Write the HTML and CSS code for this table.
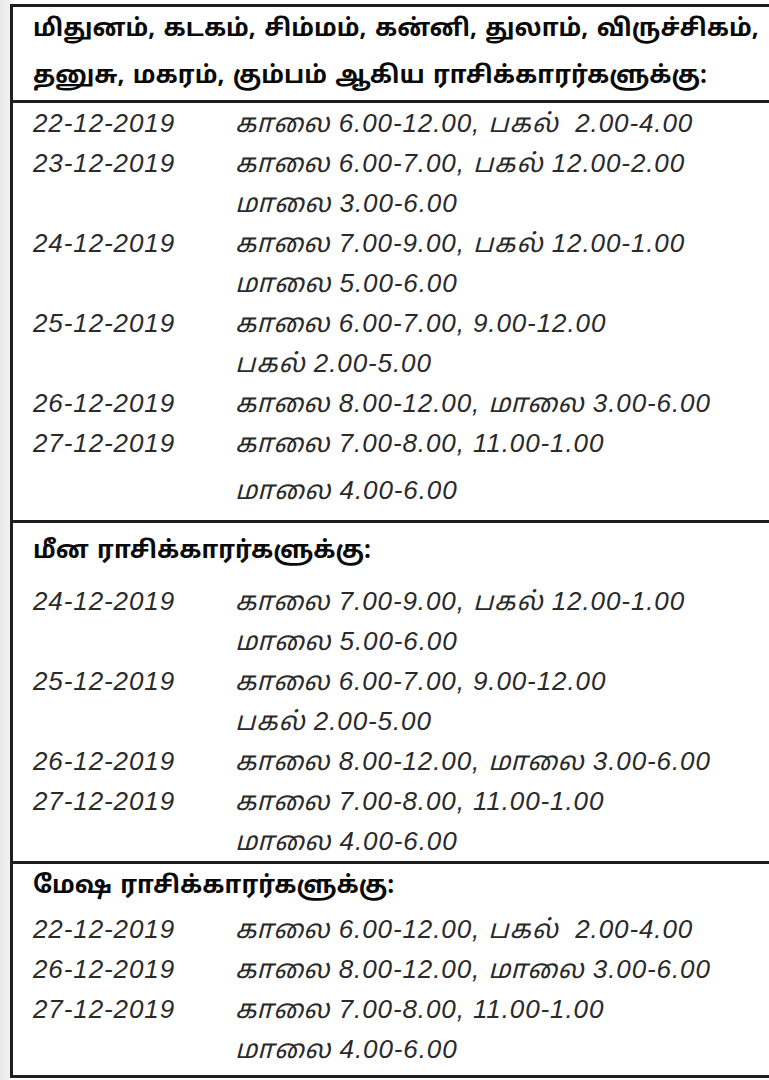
FILE: index.html
```html
<!DOCTYPE html>
<html lang="ta">
<head>
<meta charset="utf-8">
<title>ராசி நேரங்கள்</title>
<link rel="stylesheet" href="styles.css">
</head>
<body>
<div class="page">
  <div class="box">
    <section class="sec sec-1">
      <h2 class="head head-2l">மிதுனம், கடகம், சிம்மம், கன்னி, துலாம், விருச்சிகம்,<br>தனுசு, மகரம், கும்பம் ஆகிய ராசிக்காரர்களுக்கு:</h2>
      <div class="rows">
        <div class="date">22-12-2019</div><div class="time">காலை 6.00-12.00, பகல் &nbsp;2.00-4.00</div>
        <div class="date">23-12-2019</div><div class="time">காலை 6.00-7.00, பகல் 12.00-2.00<br>மாலை 3.00-6.00</div>
        <div class="date">24-12-2019</div><div class="time">காலை 7.00-9.00, பகல் 12.00-1.00<br>மாலை 5.00-6.00</div>
        <div class="date">25-12-2019</div><div class="time">காலை 6.00-7.00, 9.00-12.00<br>பகல் 2.00-5.00</div>
        <div class="date">26-12-2019</div><div class="time">காலை 8.00-12.00, மாலை 3.00-6.00</div>
        <div class="date">27-12-2019</div><div class="time">காலை 7.00-8.00, 11.00-1.00<br><span class="gap">மாலை 4.00-6.00</span></div>
      </div>
    </section>
    <section class="sec sec-2">
      <h2 class="head head-tall">மீன ராசிக்காரர்களுக்கு:</h2>
      <div class="rows">
        <div class="date">24-12-2019</div><div class="time">காலை 7.00-9.00, பகல் 12.00-1.00<br>மாலை 5.00-6.00</div>
        <div class="date">25-12-2019</div><div class="time">காலை 6.00-7.00, 9.00-12.00<br>பகல் 2.00-5.00</div>
        <div class="date">26-12-2019</div><div class="time">காலை 8.00-12.00, மாலை 3.00-6.00</div>
        <div class="date">27-12-2019</div><div class="time">காலை 7.00-8.00, 11.00-1.00<br>மாலை 4.00-6.00</div>
      </div>
    </section>
    <section class="sec sec-3">
      <h2 class="head head-3">மேஷ ராசிக்காரர்களுக்கு:</h2>
      <div class="rows">
        <div class="date">22-12-2019</div><div class="time">காலை 6.00-12.00, பகல் &nbsp;2.00-4.00</div>
        <div class="date">26-12-2019</div><div class="time">காலை 8.00-12.00, மாலை 3.00-6.00</div>
        <div class="date">27-12-2019</div><div class="time">காலை 7.00-8.00, 11.00-1.00<br>மாலை 4.00-6.00</div>
      </div>
    </section>
  </div>
</div>
</body>
</html>
```

FILE: styles.css
```css
html, body {
  margin: 0;
  padding: 0;
  background: #ffffff;
}
body {
  width: 769px;
  height: 1080px;
  overflow: hidden;
}
.page {
  display: flex;
  height: 1080px;
  background: linear-gradient(to right, #e9e9e9 0, #f1f1f1 10px, #ffffff 10px);
  padding-left: 10px;
  padding-top: 4px;
  box-sizing: border-box;
}
.box {
  width: 759px;
  flex: none;
  height: 1074px;
  box-sizing: border-box;
  border: 3px solid #1e1e1e;
  border-right: none;
  background: #fff;
  font-family: "Noto Sans Tamil", "Lohit Tamil", "Latha", "Noto Sans", sans-serif;
  color: #222;
  display: flex;
  flex-direction: column;
}
.sec + .sec {
  border-top: 3px solid #1e1e1e;
}
.head {
  margin: 0;
  padding-left: 20px;
  font-size: 24.3px;
  font-weight: 700;
  color: #0a0a0a;
  line-height: 45px;
  word-spacing: 2px;
  white-space: nowrap;
}
.head-2l {
  line-height: 46.5px;
  border-bottom: 3px solid #1e1e1e;
}
.head-tall {
  line-height: 58px;
}
.head-3 {
  line-height: 47px;
}
.rows {
  display: grid;
  grid-template-columns: 202px 1fr;
  padding-left: 20px;
  font-style: italic;
  font-size: 26px;
  line-height: 40px;
  color: #2a2a2a;
  font-family: "Liberation Sans", "Noto Sans Tamil", "Lohit Tamil", sans-serif;
  letter-spacing: 0.9px;
  white-space: nowrap;
}
.sec-1 .rows {
  padding-bottom: 10px;
}
.sec-3 .rows {
  margin-top: -2px;
}
.gap {
  display: inline-block;
  padding-top: 7px;
}
```
